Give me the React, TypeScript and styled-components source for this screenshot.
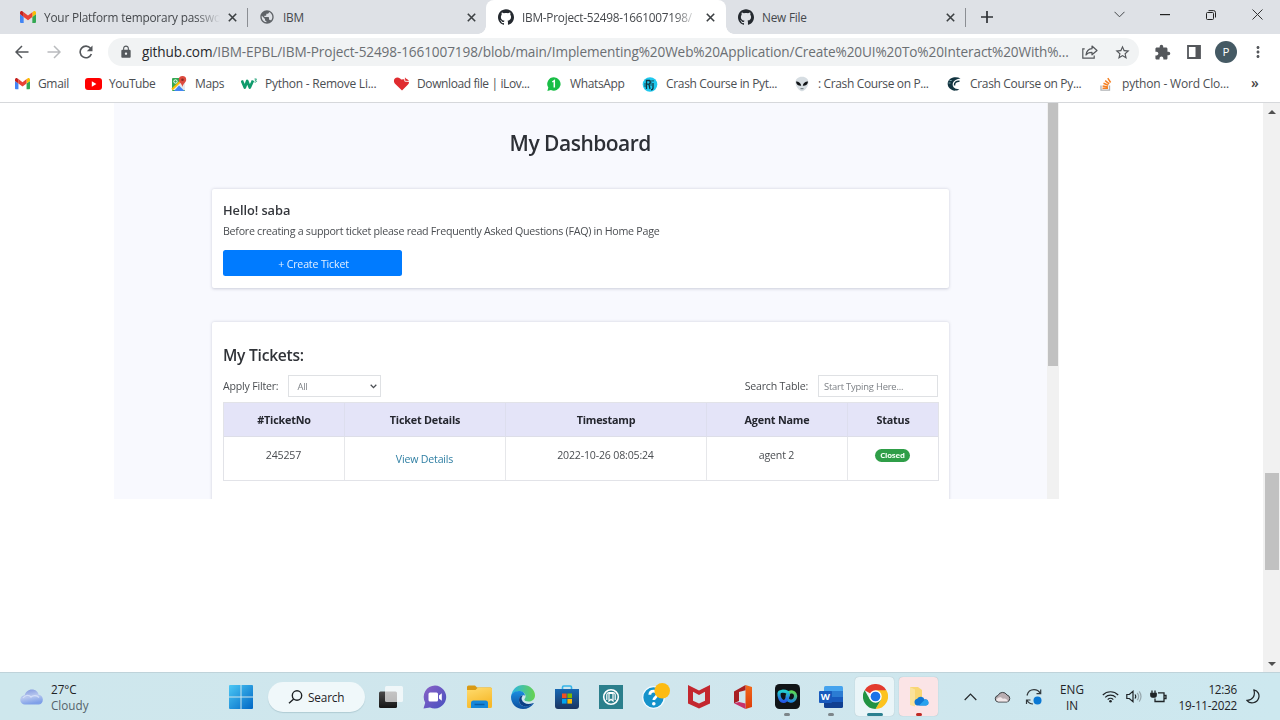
import React from "react";
import styled, { createGlobalStyle, css } from "styled-components";
import { MdExtension, MdPublic, MdLock, MdStarBorder, MdMoreVert } from "react-icons/md";
import { SiGithub } from "react-icons/si";

const Global = createGlobalStyle`
  * { box-sizing: border-box; }
  html, body { margin: 0; background: #fff; }
  body { width: 1280px; height: 720px; overflow: hidden; font-family: "Open Sans", "Noto Sans", sans-serif; }
  svg { display: block; flex: none; }
`;

const Screen = styled.div`
  width: 1280px;
  height: 720px;
  display: flex;
  flex-direction: column;
  overflow: hidden;
`;

/* ---------- tab strip ---------- */
const TabStrip = styled.div`
  height: 34px;
  flex: none;
  display: flex;
  padding-left: 8px;
  background: #dee1e6;
`;
const TabBox = styled.div<{ $active?: boolean; $divider?: boolean }>`
  position: relative;
  width: 239px;
  height: 34px;
  display: flex;
  align-items: center;
  padding: 0 6px 0 12px;
  ${(p) => p.$active && css`
    background: #fff;
    border-radius: 8px 8px 0 0;
    width: 240px;
    padding-right: 7px;
    &::before, &::after {
      content: "";
      position: absolute;
      bottom: 0;
      width: 8px;
      height: 8px;
    }
    &::before { left: -8px; background: radial-gradient(circle at 0 0, transparent 7.5px, #fff 8px); }
    &::after { right: -8px; background: radial-gradient(circle at 100% 0, transparent 7.5px, #fff 8px); }
  `}
  ${(p) => p.$divider && css`
    &::after {
      content: "";
      position: absolute;
      right: -1px;
      top: 8px;
      width: 1px;
      height: 19px;
      background: #8b8e93;
    }
  `}
`;
const TabTitle = styled.span<{ $fade?: boolean; $ls?: number }>`
  width: 176px;
  margin-left: 8px;
  font-size: 11.8px;
  line-height: 16px;
  color: #45484c;
  white-space: nowrap;
  letter-spacing: ${(p) => p.$ls ?? -0.2}px;
  ${(p) => p.$fade && css`mask-image: linear-gradient(90deg, #000 152px, transparent 176px);`}
`;
const TabClose = styled.span`
  width: 18px;
  margin-left: auto;
  display: flex;
  justify-content: center;
`;
const NewTab = styled.div`
  width: 44px;
  height: 34px;
  display: flex;
  align-items: center;
  justify-content: center;
`;
const WindowButtons = styled.div`
  margin-left: auto;
  display: flex;
  height: 29px;
`;
const WindowButton = styled.div`
  width: 46px;
  display: flex;
  align-items: center;
  justify-content: center;
`;

/* ---------- toolbar ---------- */
const Toolbar = styled.div`
  height: 36px;
  flex: none;
  display: flex;
  align-items: center;
  padding: 0 6px;
`;
const ToolSlot = styled.div<{ $dim?: boolean }>`
  width: 32px;
  height: 32px;
  display: flex;
  align-items: center;
  justify-content: center;
  color: ${(p) => (p.$dim ? "#b9bbbe" : "#54575b")};
`;
const Omnibox = styled.div`
  width: 1031px;
  height: 28px;
  margin: 0 7px 0 6px;
  padding-left: 11px;
  border-radius: 14px;
  background: #f1f3f4;
  display: flex;
  align-items: center;
  color: #55595d;
`;
const Url = styled.span`
  width: 932px;
  margin-left: 9px;
  font-size: 13.6px;
  line-height: 20px;
  letter-spacing: -0.11px;
  white-space: nowrap;
  color: #6b6f73;
  b { font-weight: 400; color: #26282b; }
`;
const Avatar = styled.div`
  width: 22px;
  height: 22px;
  border-radius: 50%;
  background: #455a64;
  color: #fff;
  font-size: 11.5px;
  line-height: 22px;
  text-align: center;
`;

/* ---------- bookmarks ---------- */
const Bookmarks = styled.div`
  height: 33px;
  flex: none;
  display: grid;
  grid-template-columns: 71px 86px 70px 152px 153px 96px 152px 152px 152px 153px 1fr;
  padding: 0 0 4px 14px;
  align-items: center;
  border-bottom: 1px solid #d6d8db;
`;
const Bookmark = styled.div`
  display: flex;
  align-items: center;
  gap: 8px;
`;
const BookmarkLabel = styled.span<{ $ls?: number }>`
  font-size: 12px;
  line-height: 18px;
  white-space: nowrap;
  color: #4b4e52;
  letter-spacing: ${(p) => p.$ls ?? 0}px;
`;
const More = styled.span`
  margin-top: -2px;
  font-size: 14px;
  line-height: 16px;
  font-weight: 600;
  color: #444;
`;

/* ---------- page ---------- */
const Viewport = styled.div`
  height: 569px;
  flex: none;
  display: flex;
  justify-content: space-between;
  background: #fff;
`;
const Shot = styled.div`
  width: 945px;
  height: 395.5px;
  margin-left: 114px;
  display: flex;
  background: #f8f9fe;
  overflow: hidden;
`;
const ShotBody = styled.div`
  width: 933px;
  padding: 0 98px 0 97.5px;
  filter: blur(0.4px);
`;
const ShotScroll = styled.div`
  width: 12px;
  background: #f1f1f1;
  padding: 0 1px;
`;
const ShotThumb = styled.div`
  height: 263px;
  background: #c1c1c1;
`;
const PageTitle = styled.h1`
  margin: 24px 0 0;
  height: 62px;
  font-size: 21px;
  line-height: 32px;
  font-weight: 600;
  text-align: center;
  color: #2d3036;
  letter-spacing: -0.5px;
`;
const Card = styled.section<{ $h: number }>`
  height: ${(p) => p.$h}px;
  padding: 0 11px 0 11.5px;
  background: #fff;
  border-radius: 2px;
  box-shadow: 0 0.5px 3px rgba(70, 75, 110, 0.25);
  margin-bottom: 34px;
  overflow: hidden;
`;
const Hello = styled.h2`
  margin: 9.5px 0 0;
  font-size: 12.8px;
  line-height: 22px;
  font-weight: 600;
  letter-spacing: -0.05px;
  color: #34373c;
`;
const Hint = styled.p`
  margin: 1px 0 9px;
  font-size: 10.7px;
  line-height: 19px;
  letter-spacing: -0.28px;
  white-space: nowrap;
  color: #4b4e52;
`;
const CreateButton = styled.button`
  display: block;
  width: 179px;
  height: 26px;
  padding: 2px 0 0 2px;
  border: 0;
  border-radius: 2.5px;
  background: #007bff;
  color: #e2f0ff;
  font: 10.6px/24px "Open Sans", sans-serif;
  letter-spacing: -0.15px;
`;
const TicketsTitle = styled.h2`
  margin: 21.5px 0 8px;
  font-size: 15.6px;
  line-height: 24px;
  font-weight: 600;
  letter-spacing: -0.25px;
  color: #303338;
`;
const Filters = styled.div`
  display: flex;
  align-items: center;
  height: 22px;
  margin-bottom: 5px;
  font-size: 10.6px;
  letter-spacing: -0.2px;
  color: #4b4e52;
`;
const Field = styled.div<{ $w: number; $pad: number }>`
  width: ${(p) => p.$w}px;
  height: 22px;
  margin-left: 10px;
  padding: 0 3px 0 ${(p) => p.$pad}px;
  border: 1px solid #dfe1e4;
  display: flex;
  align-items: center;
  justify-content: space-between;
  font-size: 9.4px;
  white-space: nowrap;
  color: #7d8186;
`;
const SearchLabel = styled.span`
  margin-left: auto;
`;
const Table = styled.div`
  display: grid;
  grid-template-columns: 121px 161px 201px 141px 90px;
  width: 716px;
  border: 1px solid #e2e3e8;
`;
const Th = styled.div`
  height: 34px;
  line-height: 34px;
  background: #e4e4f8;
  border-right: 1px solid #dddeee;
  border-bottom: 1px solid #dddee8;
  font-size: 10.8px;
  font-weight: 700;
  letter-spacing: -0.2px;
  text-align: center;
  color: #24262e;
  &:nth-child(5) { border-right: 0; }
`;
const Td = styled.div<{ $drop?: number; $link?: boolean }>`
  height: 43px;
  padding: ${(p) => 7.5 + (p.$drop ?? 0)}px 1px 0 0;
  line-height: 20px;
  border-right: 1px solid #e6e7ea;
  font-size: 10.6px;
  letter-spacing: -0.18px;
  text-align: center;
  color: ${(p) => (p.$link ? "#2f7fa3" : "#4a4d51")};
  &:last-child { border-right: 0; }
`;
const Badge = styled.span`
  display: block;
  width: 35px;
  height: 13px;
  margin: 4px auto 0;
  border-radius: 7px;
  background: #2f9e48;
  color: #f2fff4;
  font-size: 7.8px;
  line-height: 13px;
  font-weight: 700;
`;
const PageScroll = styled.div`
  width: 17px;
  background: #f1f1f1;
  display: flex;
  flex-direction: column;
  align-items: center;
  padding: 7px 0 6px;
`;
const PageThumb = styled.div`
  width: 14px;
  height: 97px;
  margin: 359px 0 auto 1px;
  background: #c1c1c1;
`;

/* ---------- taskbar ---------- */
const Taskbar = styled.div`
  height: 48px;
  flex: none;
  display: flex;
  align-items: center;
  padding: 0 0 0 20px;
  background: linear-gradient(90deg, #cee7ed, #d0e6ed 50%, #cde8ef);
  border-top: 1px solid #bfd3da;
  color: #1f2326;
`;
const Weather = styled.div`
  width: 199px;
  display: flex;
  align-items: center;
  gap: 7px;
`;
const TwoLines = styled.div<{ $align?: string; $w?: number; $ls?: number }>`
  width: ${(p) => (p.$w ? p.$w + "px" : "auto")};
  font-size: 11.7px;
  line-height: 16px;
  text-align: ${(p) => p.$align ?? "left"};
  letter-spacing: ${(p) => p.$ls ?? 0}px;
  white-space: nowrap;
  span { display: block; }
`;
const Muted = styled.span`
  color: #55636a;
`;
const TaskSlot = styled.div<{ $mark?: string; $wide?: boolean; $tint?: string }>`
  position: relative;
  width: 44px;
  height: 44px;
  display: flex;
  align-items: center;
  justify-content: center;
  ${(p) => p.$tint && css`
    &::before {
      content: "";
      position: absolute;
      inset: 2px 3px 3px 2px;
      border-radius: 4px;
      background: ${p.$tint};
      box-shadow: 0 0 1px rgba(0, 0, 0, 0.25);
    }
  `}
  ${(p) => p.$mark && css`
    &::after {
      content: "";
      position: absolute;
      bottom: 3px;
      left: ${p.$wide ? 14 : 19}px;
      width: ${p.$wide ? 16 : 6}px;
      height: 3px;
      border-radius: 2px;
      background: ${p.$mark};
    }
  `}
  svg { position: relative; }
`;
const SearchPill = styled.div`
  width: 97px;
  height: 30px;
  margin: 0 4px 0 5px;
  border-radius: 15px;
  background: #f0f8fa;
  box-shadow: 0 1px 1px rgba(60, 100, 115, 0.2);
  display: flex;
  align-items: center;
  gap: 5px;
  padding-left: 20px;
  font-size: 11.8px;
  letter-spacing: -0.15px;
`;
const Tray = styled.div`
  display: flex;
  align-items: center;
  margin-left: 13px;
`;
const TraySlot = styled.div<{ $w: number }>`
  width: ${(p) => p.$w}px;
  display: flex;
  justify-content: center;
`;

/* ---------- icons ---------- */
const Close = () => (
  <svg width="9" height="9" viewBox="0 0 9 9" stroke="#3c4043" strokeWidth="1.6"><path d="M.8.8l7.4 7.4M8.2.8L.8 8.2" /></svg>
);
const GmailIcon = ({ w = 15 }: { w?: number }) => (
  <svg width={w} height={w * 0.76} viewBox="0 0 24 18">
    <path fill="#4285f4" d="M1.6 18h3.9V8.7L0 4.5v11.9C0 17.3.7 18 1.6 18z" />
    <path fill="#34a853" d="M18.5 18h3.9c.9 0 1.6-.7 1.6-1.6V4.5l-5.5 4.2z" />
    <path fill="#fbbc04" d="M18.5 1.6v7.1L24 4.5V2.4c0-2-2.3-3.1-3.9-1.9z" />
    <path fill="#ea4335" d="M5.5 8.7V1.6L12 6.5l6.5-4.9v7.1L12 13.6z" />
    <path fill="#c5221f" d="M0 2.4v2.1l5.5 4.2V1.6L3.9.5C2.300-.7 0 .4 0 2.400z" />
  </svg>
);
const YouTubeIcon = () => (
  <svg width="17" height="12" viewBox="0 0 17 12"><rect width="17" height="12" rx="3" fill="#f00" /><path d="M6.800 3.300v5.400L11.400 6z" fill="#fff" /></svg>
);
const MapsIcon = () => (
  <svg width="16" height="16" viewBox="0 0 16 16">
    <rect x="1" y="2" width="13" height="13" rx="1" fill="#34a853" />
    <path d="M1 14L13 2l1 1v11z" fill="#e8eaed" />
    <path d="M3 15l5-5.500 5.500 5.500z" fill="#4285f4" />
    <path d="M1 13.500L12 3" stroke="#fbbc04" strokeWidth="2" />
    <path d="M11.500 0a3.700 3.700 0 0 1 3.700 3.700c0 2.500-3 3.600-3.700 7.300-.7-3.700-3.700-4.800-3.700-7.300A3.700 3.700 0 0 1 11.500 0z" fill="#dd4b3e" />
    <circle cx="11.500" cy="3.700" r="1.300" fill="#8a2c24" />
    <circle cx="4.500" cy="5.500" r="1.700" fill="none" stroke="#fff" />
  </svg>
);
const W3Icon = () => (
  <svg width="17" height="12" viewBox="0 0 17 12" fill="none" stroke="#0f9b6c">
    <path d="M.8 2.500l3 7L6.200 3l2.600 6.500 3.200-7" strokeWidth="2.700" strokeLinejoin="round" />
    <path d="M13.500 1h2l-1.200 1.400c1.800 0 1.600 2.200-.8 1.600" strokeWidth=".9" />
  </svg>
);
const HeartIcon = () => (
  <svg width="17" height="16" viewBox="0 0 17 16">
    <path d="M9 14.500L1.800 7.400C-.2 4.800 1.400 1.500 4.500 1.500c1.800 0 2.800 1 3.600 2.100l5.700-.5c2.500 1.400 2.800 4 1.200 5.500z" fill="#e02b2f" />
    <path d="M11.500 1l.3 4.200 4.400.3" fill="#e02b2f" stroke="#fff" strokeWidth=".9" />
  </svg>
);
const WhatsAppIcon = () => (
  <svg width="16" height="14" viewBox="0 0 16 14"><path d="M8 .3A6.700 6.700 0 1 1 4.900 13l-3.500 1 .9-3.400A6.700 6.700 0 0 1 8 .3z" fill="#19be46" /><path d="M6.300 5l2-1.400v7" fill="none" stroke="#fff" strokeWidth="1.500" /></svg>
);
const RjIcon = () => (
  <svg width="16" height="15" viewBox="0 0 16 15"><circle cx="8" cy="7.500" r="7.300" fill="#1fc8ee" /><path d="M4.500 12V3.500h3q1.700 2-.5 3.700H5M7 7.500l1 4.500M11 6v5q0 1.800-2 1.800M11 3.300v1.200" fill="none" stroke="#10353f" strokeWidth="1.300" /><path d="M3 6v4M9 3v6" stroke="#10353f" strokeWidth=".8" /></svg>
);
const AlienIcon = () => (
  <svg width="16" height="16" viewBox="0 0 16 16"><path d="M8 .8c4 0 6.800 2.600 6.500 6C14.200 10.500 11 15.200 8 15.200S1.800 10.500 1.500 6.800C1.200 3.400 4 .8 8 .8z" fill="#d6dde2" /><path d="M2 5.500c2.500-.2 5 1.500 5.200 4.300C4.500 10 2 8.500 2 5.500zM14 5.500c-2.500-.2-5 1.500-5.200 4.300C11.500 10 14 8.500 14 5.500z" fill="#101316" /><path d="M6.500 12.700h3" stroke="#6b747a" /></svg>
);
const CrescentIcon = () => (
  <svg width="16" height="14" viewBox="0 0 16 14"><path d="M14.500 1.500C10-1.200 3 .5 1.800 5.500.8 10 5 14 9.500 13.600c2 0 3-.6 3.800-1.400C9 12.500 6 10 6.800 6.500 7.500 3.500 11 2 14.500 1.500z" fill="#123440" /><path d="M13.500 4.300c-3-.3-5.300 1.200-5 4.200" stroke="#123440" fill="none" strokeWidth="1.500" /><path d="M3.500 3.500h2.200M2.500 6h2" stroke="#78a0a8" /></svg>
);
const StackIcon = () => (
  <svg width="14" height="14" viewBox="0 0 14 14" fill="none"><path d="M2 8.500v4.700h8.500V8.500" stroke="#b0b2b5" strokeWidth="1.300" /><g stroke="#f48024" strokeWidth="1.500"><path d="M3.500 11.300h5.500M3.600 8.900l5.400 1M4.500 6.300l4.800 2M6.200 3.600l4 3.200M8.800 1.200l2.800 4.300" /></g></svg>
);
const BackArrow = ({ flip }: { flip?: boolean }) => (
  <svg width="14" height="14" viewBox="0 0 14 14" fill="none" stroke="currentColor" strokeWidth="1.500"><path d={flip ? "M.5 7h12.300M7 1l6 6-6 6" : "M13.500 7H1.200M7 1L1 7l6 6"} /></svg>
);
const Reload = () => (
  <svg width="14" height="14" viewBox="0 0 14 14"><path d="M12.400 9a5.800 5.800 0 1 1-.9-5.700" fill="none" stroke="currentColor" strokeWidth="1.600" /><path d="M13.500.5v5.700H7.800z" fill="currentColor" /></svg>
);
const ShareIcon = () => (
  <svg width="16" height="14" viewBox="0 0 16 14" fill="none" stroke="currentColor" strokeWidth="1.200"><path d="M2.700 3.800H.8v9.400h11.400v-2.700" /><path d="M10 1l5 4.500-5 4.300V7.300c-3 0-4.800.8-6 2.700.4-3.500 2.500-6 6-6.300z" strokeLinejoin="round" /></svg>
);
const PanelIcon = () => (
  <svg width="14" height="14" viewBox="0 0 14 14"><path d="M1 1h12v12H1z" fill="#fff" stroke="#54575b" strokeWidth="1.800" /><path d="M8.500 1H13v12H8.500z" fill="#54575b" /></svg>
);
const CloudIcon = () => (
  <svg width="24" height="16" viewBox="0 0 24 16"><defs><linearGradient id="cl" x2=".3" y2="1"><stop stopColor="#7c93dd" /><stop offset=".55" stopColor="#b9c9ef" /><stop offset="1" stopColor="#7fa0e8" /></linearGradient></defs><path d="M5 15.500a4.600 4.600 0 0 1-.3-9.200C5.500 3 8.200.5 12 .5c3.500 0 6 2.200 6.600 5.200A5 5 0 0 1 19 15.500z" fill="url(#cl)" /><path d="M3 9c2-3 6-3.500 8-1 2-2 6-2 8 .5" fill="none" stroke="#dbe5fa" strokeWidth="1.300" opacity=".8" /></svg>
);
const StartIcon = () => (
  <svg width="24" height="24" viewBox="0 0 24 24"><defs><linearGradient id="st" x2="1" y2="1"><stop stopColor="#4cc8f5" /><stop offset="1" stopColor="#0067c5" /></linearGradient></defs><path d="M1 0h10.500v11.500H0V1a1 1 0 0 1 1-1zM12.500 0H23a1 1 0 0 1 1 1v10.500H12.500zM0 12.500h11.500V24H1a1 1 0 0 1-1-1zM12.500 12.500H24V23a1 1 0 0 1-1 1H12.500z" fill="url(#st)" /></svg>
);
const Lens = () => (
  <svg width="15" height="14" viewBox="0 0 15 14" fill="none" stroke="#1d2225" strokeWidth="1.400"><circle cx="9" cy="5.500" r="4.700" /><path d="M5.700 9L1 13.300" /></svg>
);
const TaskView = () => (
  <svg width="24" height="24" viewBox="0 0 24 24"><defs><linearGradient id="tv" y2="1" x2="0"><stop stopColor="#4a4a4a" /><stop offset="1" stopColor="#151515" /></linearGradient></defs><rect x="0" y="6.500" width="18" height="16.500" rx="1.500" fill="url(#tv)" /><rect x="6" y="1" width="18" height="16" rx="1.500" fill="#fff" opacity=".68" /></svg>
);
const ChatIcon = () => (
  <svg width="24" height="24" viewBox="0 0 24 24"><defs><linearGradient id="ch" x2="1" y2="1"><stop stopColor="#8b62c6" /><stop offset="1" stopColor="#4650c0" /></linearGradient></defs><path d="M12 .5a11.500 11.500 0 1 1-5 22L.5 23.500l1.700-5.800A11.500 11.500 0 0 1 12 .5z" fill="url(#ch)" /><rect x="5.500" y="7.500" width="9.500" height="9" rx="1.500" fill="#fff" /><path d="M16 10.500l2.800-2.300v7.600L16 13.500z" fill="#fff" /></svg>
);
const FolderIcon = () => (
  <svg width="25" height="23" viewBox="0 0 25 23"><path d="M0 2a1.500 1.500 0 0 1 1.500-1.500H8l2 2h13.500A1.500 1.500 0 0 1 25 4v4H0z" fill="#d99a14" /><defs><linearGradient id="fo" y2="1" x2=".4"><stop stopColor="#ffdc70" /><stop offset="1" stopColor="#f7b92a" /></linearGradient></defs><path d="M0 5h8.500L11 2.500h12.500A1.500 1.500 0 0 1 25 4v17.500a1.500 1.500 0 0 1-1.500 1.500h-22A1.500 1.500 0 0 1 0 21.500z" fill="url(#fo)" /><path d="M4 23v-5a2.500 2.500 0 0 1 2.500-2.500h12A2.500 2.500 0 0 1 21 18v5z" fill="#1687d9" /><path d="M7.500 19.500h10" stroke="#0b5ea8" strokeWidth="1.500" /></svg>
);
const EdgeIcon = () => (
  <svg width="24" height="24" viewBox="0 0 24 24"><defs><linearGradient id="e1" x2="1"><stop stopColor="#2ab4e8" /><stop offset="1" stopColor="#66d34e" /></linearGradient><linearGradient id="e2" y2="1" x2="0"><stop stopColor="#1b8ee0" /><stop offset="1" stopColor="#0d4f9e" /></linearGradient></defs><path d="M.3 11C1 4.600 5.800 0 12 0c7 0 12 5 12 10.300 0 4-3 6.300-6.500 6.300-2.800 0-4.200-1-4.200-2 0-.8 1.300-1.300 1.300-3.300C14.600 8.500 12 6.500 8.500 6.500 4.500 6.500 1.500 8.500.3 11z" fill="url(#e1)" /><path d="M0 12c0-3 3.500-6 8-6 3.500 0 6 2 6 4.700-2.500-1.500-6 .5-6 4.500 0 4.500 4.500 7 9 5.800 2-.5 4-1.800 5.200-3 .5-.3.800 0 .5.500C20.500 22 16.500 24 12 24 5 24 0 18.500 0 12z" fill="url(#e2)" /><path d="M8 15c0 5 5 7.500 9.500 6 2-.7 3.700-1.700 4.700-3-5 2.200-10 .8-11.500-3.500C10.300 12.500 11 11.500 12 10.500 9.500 10.300 8 12.500 8 15z" fill="#0b3f86" /></svg>
);
const StoreIcon = () => (
  <svg width="24" height="24" viewBox="0 0 24 24"><path d="M7.500 5V2.200C7.500 1.500 8 1 8.700 1h6.600c.7 0 1.200.5 1.200 1.200V5" fill="none" stroke="#35b4e8" strokeWidth="1.600" /><defs><linearGradient id="so" y2="1" x2="0"><stop stopColor="#1768b3" /><stop offset="1" stopColor="#1b3460" /></linearGradient></defs><path d="M0 4h24v17a3 3 0 0 1-3 3H3a3 3 0 0 1-3-3z" fill="url(#so)" /><path d="M7 8.500h4.600v4.600H7z" fill="#f25022" /><path d="M12.400 8.500H17v4.600h-4.600z" fill="#7fba00" /><path d="M7 14h4.600v4.600H7z" fill="#00a4ef" /><path d="M12.400 14H17v4.600h-4.600z" fill="#ffb900" /></svg>
);
const TealIcon = () => (
  <svg width="24" height="24" viewBox="0 0 24 24"><path d="M0 0h24v24H0z" fill="#2b7f8c" /><circle cx="12" cy="12" r="7.300" fill="none" stroke="#fff" strokeWidth="1.600" /><path d="M7.800 15V9.500A2.300 2.300 0 0 1 10 7.500h4a2.300 2.300 0 0 1 2.200 2V15M10 16V8.500h4V16l-2-1.700z" fill="none" stroke="#fff" strokeWidth="1.200" /></svg>
);
const HelpIcon = () => (
  <svg width="30" height="28" viewBox="0 0 30 28"><circle cx="13.500" cy="14.500" r="10.800" fill="#1593cb" stroke="#f3fbff" strokeWidth="1.300" /><path d="M9.800 11.800c0-5 7.700-4.800 7.700-.5 0 3-3.700 2.700-3.700 5.800" fill="none" stroke="#fff" strokeWidth="2.800" /><circle cx="13.800" cy="20.800" r="1.800" fill="#fff" /><circle cx="22.200" cy="7.800" r="7.800" fill="#fdbb12" /></svg>
);
const McAfeeIcon = () => (
  <svg width="22" height="25" viewBox="0 0 22 25"><path d="M0 1l11 5.500L22 1v18.500L11 24.500 0 19.500z" fill="#c3272f" /><path d="M5 7.800l6 3.200 6-3.200v9L11 19.500 5 16.800z" fill="#d0e6ed" /></svg>
);
const OfficeIcon = () => (
  <svg width="20" height="24" viewBox="0 0 20 24"><defs><linearGradient id="of" y2="1" x2="0"><stop stopColor="#f26a1b" /><stop offset="1" stopColor="#dc3b0a" /></linearGradient></defs><path d="M12.500 0L19 2v20l-6.500 2z" fill="url(#of)" /><path d="M1 6.500L12.500 0v5.200L6 7v9l-5 2.200z" fill="#a81f22" /><path d="M1 18.300L12.500 24v-5.500L6 17z" fill="#c8306a" /></svg>
);
const WebexIcon = () => (
  <svg width="25" height="25" viewBox="0 0 25 25"><defs><linearGradient id="wa" y2="1" x2="0"><stop stopColor="#22cfd0" /><stop offset="1" stopColor="#2458e8" /></linearGradient><linearGradient id="wb" y2="1" x2="0"><stop stopColor="#58d65a" /><stop offset="1" stopColor="#1d86e0" /></linearGradient></defs><rect width="25" height="25" rx="4.500" fill="#101417" /><ellipse cx="16.300" cy="12.500" rx="4.200" ry="4.700" fill="none" stroke="url(#wb)" strokeWidth="3.200" transform="rotate(15 16.300 12.500)" /><path d="M12.800 8.500C9 6.500 4.300 6.800 4 9.500c-.3 3.500 1.500 8 4.700 8 2.800 0 3.800-4.500 4.800-6.500" fill="none" stroke="url(#wa)" strokeWidth="3.200" strokeLinecap="round" /></svg>
);
const WordBox = styled.div`
  position: relative;
  width: 24px;
  height: 22px;
  display: flex;
  align-items: center;
  justify-content: flex-end;
`;
const WordPage = styled.div`
  width: 19px;
  height: 22px;
  border-radius: 1.500px;
  background: linear-gradient(#45a3ee 0 25%, #2b7cd3 25% 50%, #185abd 50% 75%, #103f91 75%);
`;
const WordLetter = styled.span`
  position: absolute;
  left: 0;
  top: 5px;
  width: 12.500px;
  height: 12px;
  border-radius: 1px;
  background: #185abd;
  color: #fff;
  font-size: 9.500px;
  line-height: 12px;
  font-weight: 700;
  text-align: center;
`;
const ChromeIcon = () => (
  <svg width="25" height="25" viewBox="0 0 48 48"><path d="M24 24L3.200 12A24 24 0 0 1 44.800 12z" fill="#e33b2e" /><path d="M44.800 12A24 24 0 0 1 24 48l10.400-18L24 12z" fill="#fcc31e" /><path d="M3.200 12A24 24 0 0 0 24 48l10.400-18H13.600z" fill="#229342" /><circle cx="24" cy="24" r="12" fill="#fff" /><circle cx="24" cy="24" r="9.300" fill="#1a73e8" /></svg>
);
const DriveFolder = () => (
  <svg width="20" height="22" viewBox="0 0 20 22"><path d="M1 1h8l4 3v15H1z" fill="#f9d673" /><path d="M1 1l5 2.500v17L1 19z" fill="#fbe29a" /><path d="M8.500 19.500a3.400 3.400 0 0 1-.3-6.700 4 4 0 0 1 7.300.7 3 3 0 0 1 1.500 6z" fill="#0f78d4" /><path d="M10 19.500l6-6a3 3 0 0 1 1 6z" fill="#28a2ee" /></svg>
);

const bookmarks: { icon: React.ReactNode; label: string; ls: number }[] = [
  { icon: <GmailIcon />, label: "Gmail", ls: -0.35 },
  { icon: <YouTubeIcon />, label: "YouTube", ls: -0.45 },
  { icon: <MapsIcon />, label: "Maps", ls: -0.35 },
  { icon: <W3Icon />, label: "Python - Remove Li...", ls: -0.25 },
  { icon: <HeartIcon />, label: "Download file | iLov...", ls: -0.39 },
  { icon: <WhatsAppIcon />, label: "WhatsApp", ls: -0.35 },
  { icon: <RjIcon />, label: "Crash Course in Pyt...", ls: -0.33 },
  { icon: <AlienIcon />, label: ": Crash Course on P...", ls: -0.36 },
  { icon: <CrescentIcon />, label: "Crash Course on Py...", ls: -0.33 },
  { icon: <StackIcon />, label: "python - Word Clo...", ls: -0.18 },
];
const IconCell = styled.span`
  width: 16px;
  display: flex;
  justify-content: center;
`;

const headers = ["#TicketNo", "Ticket Details", "Timestamp", "Agent Name", "Status"];

export default function App() {
  return (
    <>
      <Global />
      <Screen>
        <TabStrip>
          <TabBox $divider>
            <GmailIcon w={16} />
            <TabTitle $fade $ls={-0.17}>Your Platform temporary passwo</TabTitle>
            <TabClose><Close /></TabClose>
          </TabBox>
          <TabBox>
            <MdPublic size={16} color="#5f6368" />
            <TabTitle>IBM</TabTitle>
            <TabClose><Close /></TabClose>
          </TabBox>
          <TabBox $active>
            <SiGithub size={16} color="#24292f" />
            <TabTitle $fade $ls={-0.24}>IBM-Project-52498-1661007198/</TabTitle>
            <TabClose><Close /></TabClose>
          </TabBox>
          <TabBox $divider>
            <SiGithub size={16} color="#24292f" />
            <TabTitle>New File</TabTitle>
            <TabClose><Close /></TabClose>
          </TabBox>
          <NewTab>
            <svg width="12" height="12" viewBox="0 0 12 12" stroke="#2f3236" strokeWidth="1.700"><path d="M6 0v12M0 6h12" /></svg>
          </NewTab>
          <WindowButtons>
            <WindowButton><svg width="11" height="7" viewBox="0 0 11 7" fill="none" stroke="#44474a"><path d="M.5.8l5 5 5-5" /></svg></WindowButton>
            <WindowButton><svg width="10" height="2" viewBox="0 0 10 2"><path d="M0 0h10v1.200H0z" fill="#222" /></svg></WindowButton>
            <WindowButton><svg width="10" height="10" viewBox="0 0 10 10" fill="none" stroke="#222"><rect x=".5" y="2.500" width="7" height="7" rx="1" /><path d="M2.500.6H7.500a2 2 0 0 1 2 2V7.500" /></svg></WindowButton>
            <WindowButton><svg width="11" height="11" viewBox="0 0 11 11" stroke="#333"><path d="M.5.5l10 10M10.500.5l-10 10" /></svg></WindowButton>
          </WindowButtons>
        </TabStrip>

        <Toolbar>
          <ToolSlot><BackArrow /></ToolSlot>
          <ToolSlot $dim><BackArrow flip /></ToolSlot>
          <ToolSlot><Reload /></ToolSlot>
          <Omnibox>
            <MdLock size={14} />
            <Url><b>github.com</b>/IBM-EPBL/IBM-Project-52498-1661007198/blob/main/Implementing%20Web%20Application/Create%20UI%20To%20Interact%20With%...</Url>
            <ToolSlot><ShareIcon /></ToolSlot>
            <ToolSlot><MdStarBorder size={17} /></ToolSlot>
          </Omnibox>
          <ToolSlot><MdExtension size={17} /></ToolSlot>
          <ToolSlot><PanelIcon /></ToolSlot>
          <ToolSlot><Avatar>P</Avatar></ToolSlot>
          <ToolSlot><MdMoreVert size={18} /></ToolSlot>
        </Toolbar>

        <Bookmarks>
          {bookmarks.map((b) => (
            <Bookmark key={b.label}>
              <IconCell>{b.icon}</IconCell>
              <BookmarkLabel $ls={b.ls}>{b.label}</BookmarkLabel>
            </Bookmark>
          ))}
          <More>»</More>
        </Bookmarks>

        <Viewport>
          <Shot>
            <ShotBody>
              <PageTitle>My Dashboard</PageTitle>
              <Card $h={98.5}>
                <Hello>Hello! saba</Hello>
                <Hint>Before creating a support ticket please read Frequently Asked Questions (FAQ) in Home Page</Hint>
                <CreateButton>+ Create Ticket</CreateButton>
              </Card>
              <Card $h={200}>
                <TicketsTitle>My Tickets:</TicketsTitle>
                <Filters>
                  <span>Apply Filter:</span>
                  <Field $w={93} $pad={8}>
                    All
                    <svg width="7" height="5" viewBox="0 0 7 5" fill="none" stroke="#4c4f54" strokeWidth="1.300"><path d="M.7.800l2.800 2.800L6.300.800" /></svg>
                  </Field>
                  <SearchLabel>Search Table:</SearchLabel>
                  <Field $w={120} $pad={5}>Start Typing Here...</Field>
                </Filters>
                <Table>
                  {headers.map((h) => <Th key={h}>{h}</Th>)}
                  <Td>245257</Td>
                  <Td $drop={4.5} $link>View Details</Td>
                  <Td>2022-10-26 08:05:24</Td>
                  <Td>agent 2</Td>
                  <Td><Badge>Closed</Badge></Td>
                </Table>
              </Card>
            </ShotBody>
            <ShotScroll><ShotThumb /></ShotScroll>
          </Shot>
          <PageScroll>
            <svg width="8" height="4" viewBox="0 0 8 4"><path d="M4 0l4 4H0z" fill="#505050" /></svg>
            <PageThumb />
            <svg width="8" height="4" viewBox="0 0 8 4"><path d="M0 0h8L4 4z" fill="#505050" /></svg>
          </PageScroll>
        </Viewport>

        <Taskbar>
          <Weather>
            <CloudIcon />
            <TwoLines><span>27°C</span><Muted>Cloudy</Muted></TwoLines>
          </Weather>
          <TaskSlot><StartIcon /></TaskSlot>
          <SearchPill><Lens />Search</SearchPill>
          <TaskSlot><TaskView /></TaskSlot>
          <TaskSlot><ChatIcon /></TaskSlot>
          <TaskSlot><FolderIcon /></TaskSlot>
          <TaskSlot><EdgeIcon /></TaskSlot>
          <TaskSlot><StoreIcon /></TaskSlot>
          <TaskSlot><TealIcon /></TaskSlot>
          <TaskSlot><HelpIcon /></TaskSlot>
          <TaskSlot><McAfeeIcon /></TaskSlot>
          <TaskSlot><OfficeIcon /></TaskSlot>
          <TaskSlot $mark="#7d868a"><WebexIcon /></TaskSlot>
          <TaskSlot $mark="#7d868a"><WordBox><WordPage /><WordLetter>W</WordLetter></WordBox></TaskSlot>
          <TaskSlot $mark="#2b8090" $wide $tint="#eaf5f8"><ChromeIcon /></TaskSlot>
          <TaskSlot $mark="#bf2a24" $tint="#fbe4e6"><DriveFolder /></TaskSlot>
          <Tray>
            <TraySlot $w={32}><svg width="13" height="8" viewBox="0 0 13 8" fill="none" stroke="#23282b" strokeWidth="1.200"><path d="M.7 7l5.800-6 5.800 6" /></svg></TraySlot>
            <TraySlot $w={32}><svg width="17" height="12" viewBox="0 0 17 12"><path d="M4 11a3.300 3.300 0 0 1 0-6.500 5 5 0 0 1 9-.5 3.600 3.600 0 0 1 0 7z" fill="#b9aeb2" stroke="#3a3f42" /><path d="M2 9c2-3 5-4 7-1 2-1 4 0 5 2.500H4z" fill="#f1e8ea" /></svg></TraySlot>
            <TraySlot $w={32}><svg width="18" height="18" viewBox="0 0 18 18" fill="none" stroke="#33393c" strokeWidth="1.200"><path d="M2 7.500C3 3.500 6 1.700 9 1.700c3 0 5 1.500 6.300 3.800M15.700 1.500v4.200h-4.200M1.500 16v-4h4M2 12.300c1.300 2.500 3.500 3.700 6 3.700" /><circle cx="12.500" cy="12.500" r="4" fill="#0a78d4" stroke="none" /></svg></TraySlot>
            <TwoLines $align="center" $w={44}><span>ENG</span><span>IN</span></TwoLines>
            <TraySlot $w={32}><svg width="17" height="13" viewBox="0 0 17 13" fill="none" stroke="#1f2427" strokeWidth="1.200"><path d="M.8 5a10.800 10.800 0 0 1 15.400 0M3.200 7.400a7.500 7.500 0 0 1 10.600 0M5.700 9.600a4 4 0 0 1 5.600 0" /><circle cx="8.500" cy="11.300" r="1.300" fill="#1f2427" stroke="none" /></svg></TraySlot>
            <TraySlot $w={16}><svg width="16" height="13" viewBox="0 0 16 13" fill="none" stroke="#1f2427" strokeWidth="1.200"><path d="M.8 4.500h2.500L7 1.300v10.400L3.300 8.500H.8zM9 4.500q1.500 2 0 4" /><path d="M11.200 2.800q2.800 3.700 0 7.400M13.200 1.300q3.600 5.200 0 10.400" stroke="#96a7ad" /></svg></TraySlot>
            <TraySlot $w={32}><svg width="17" height="13" viewBox="0 0 17 13" fill="none" stroke="#1f2427" strokeWidth="1.300"><path d="M8 2.800h6v8.700H5V8.500M14.500 5.500h1.500v3h-1.500" /><path d="M2 .5v3M5 .5v3M.8 3.500h5.400v1.700q0 2-2.700 2-2.700 0-2.700-2z" fill="#1f2427" /></svg></TraySlot>
            <TwoLines $align="right" $w={63} $ls={-0.25}><span>12:36</span><span>19-11-2022</span></TwoLines>
            <TraySlot $w={32}><svg width="14" height="15" viewBox="0 0 14 15" fill="none" stroke="#1f2427" strokeWidth="1.200"><path d="M7.800.8c4.500 1 6 5 4.800 8.500-1.600 5-8.600 6.200-11.800 2 5.500.2 9-4.300 7-10.500z" strokeLinejoin="round" /></svg></TraySlot>
          </Tray>
        </Taskbar>
      </Screen>
    </>
  );
}
